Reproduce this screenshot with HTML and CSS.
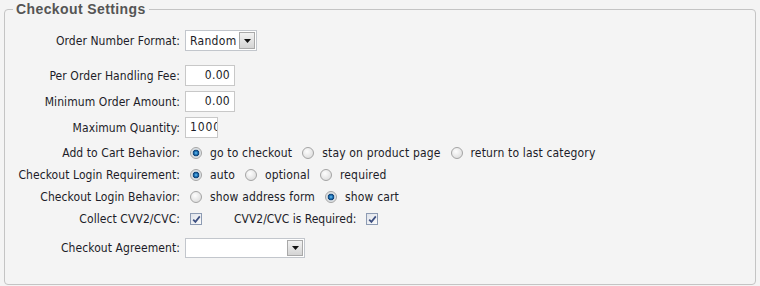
FILE: index.html
```html
<html>
	<head>
		<link rel="stylesheet" href="styles.css">
	</head>
	<body>
		<fieldset class="settings">
  <legend>Checkout Settings</legend>

  <div class="row row-first">
    <span class="field-label">Order Number Format:</span>
    <div class="select select-format">
      <span class="select-value">Random</span>
      <span class="select-btn"><svg width="7" height="4" viewBox="0 0 7 4"><path d="M0 0h7L3.5 4z" fill="#111"/></svg></span>
    </div>
  </div>

  <div class="row">
    <span class="field-label">Per Order Handling Fee:</span>
    <span class="text-input money">0.00</span>
  </div>
  <div class="row">
    <span class="field-label">Minimum Order Amount:</span>
    <span class="text-input money">0.00</span>
  </div>
  <div class="row row-last-input">
    <span class="field-label">Maximum Quantity:</span>
    <span class="text-input qty">1000</span>
  </div>

  <div class="row row-choice">
    <span class="field-label">Add to Cart Behavior:</span>
    <div class="options">
      <span class="radio checked"></span><span class="opt">go to checkout</span>
      <span class="radio"></span><span class="opt">stay on product page</span>
      <span class="radio"></span><span class="opt">return to last category</span>
    </div>
  </div>
  <div class="row row-choice">
    <span class="field-label">Checkout Login Requirement:</span>
    <div class="options">
      <span class="radio checked"></span><span class="opt">auto</span>
      <span class="radio"></span><span class="opt">optional</span>
      <span class="radio"></span><span class="opt">required</span>
    </div>
  </div>
  <div class="row row-choice">
    <span class="field-label">Checkout Login Behavior:</span>
    <div class="options">
      <span class="radio"></span><span class="opt">show address form</span>
      <span class="radio checked"></span><span class="opt">show cart</span>
    </div>
  </div>
  <div class="row row-choice row-cvv">
    <span class="field-label">Collect CVV2/CVC:</span>
    <div class="options">
      <span class="checkbox"><svg width="9" height="9" viewBox="0 0 9 9"><path d="M1.2 4.6l2.2 2.3L7.8 1.4" stroke="#3d4f80" stroke-width="1.7" fill="none"/></svg></span>
      <span class="inline-label">CVV2/CVC is Required:</span>
      <span class="checkbox"><svg width="9" height="9" viewBox="0 0 9 9"><path d="M1.2 4.6l2.2 2.3L7.8 1.4" stroke="#3d4f80" stroke-width="1.7" fill="none"/></svg></span>
    </div>
  </div>

  <div class="row">
    <span class="field-label">Checkout Agreement:</span>
    <div class="select select-agreement">
      <span class="select-value"></span>
      <span class="select-btn"><svg width="7" height="4" viewBox="0 0 7 4"><path d="M0 0h7L3.5 4z" fill="#111"/></svg></span>
    </div>
  </div>
</fieldset>
	</body>

</html>
```

FILE: styles.css
```css
body {
  margin: 0;
  background: #f4f4f4;
  color: #1c1c28;
  font: 12px "DejaVu Sans Condensed", "Liberation Sans", sans-serif;
}

.settings {
  margin: 0 4px;
  padding: 12px 0 21px;
  border: 1px solid #c4c4c4;
  border-radius: 4px;
}

.settings legend {
  margin-left: 8px;
  padding: 0 3px;
  color: #555;
  font: bold 14px/18px "Liberation Sans", Arial, sans-serif;
  letter-spacing: 0.4px;
}

/* label column + control column */
.row {
  display: grid;
  grid-template-columns: 175px auto;
  column-gap: 5px;
  align-items: center;
  justify-items: start;
  height: 21px;
  margin-bottom: 5px;
}

.row-first {
  margin-bottom: 14px;
}

.row-last-input {
  margin-bottom: 4px;
}

.row-choice {
  height: 22px;
  margin-bottom: 0;
}

.row-cvv {
  margin-bottom: 7px;
}

.field-label {
  justify-self: end;
  white-space: nowrap;
  letter-spacing: 0.08px;
}

.text-input {
  box-sizing: border-box;
  height: 21px;
  padding: 0 4px;
  border: 1px solid #c8c8c8;
  background: #fff;
  line-height: 19px;
  overflow: hidden;
  white-space: nowrap;
}

.money {
  width: 50px;
  text-align: right;
  letter-spacing: 0.3px;
}

.qty {
  width: 33px;
  padding: 0 0 0 4px;
  letter-spacing: 0.9px;
  text-overflow: clip;
}

.select {
  box-sizing: border-box;
  display: flex;
  align-items: center;
  height: 21px;
  padding: 1px;
  border: 1px solid #c2c6cc;
  background: #fff;
}

.select-format {
  width: 72px;
}

.select-agreement {
  width: 120px;
  height: 20px;
}

.select-value {
  flex: 1;
  padding-left: 3px;
  letter-spacing: 0.3px;
}

.select-btn {
  box-sizing: border-box;
  display: flex;
  align-items: center;
  justify-content: center;
  width: 16px;
  height: 100%;
  border: 1px solid #a9a9a9;
  background: linear-gradient(#f2f2f2, #d4d4d4);
}

.options {
  display: flex;
  align-items: center;
}

.opt {
  margin: 0 5px 0 8px;
  letter-spacing: 0.16px;
}

.radio {
  box-sizing: border-box;
  width: 12px;
  height: 12px;
  margin-left: 5px;
  border: 1px solid #a4a4a4;
  border-radius: 50%;
  background: radial-gradient(circle at 40% 35%, #fdfdfd, #d6d6d6);
}

.radio.checked {
  background: radial-gradient(circle, #6ec4f2 0, #2075b8 1.6px, #0f3f72 3px, #cfd6dc 3.6px, #f3f3f3 6px);
}

.checkbox {
  box-sizing: border-box;
  display: flex;
  align-items: center;
  justify-content: center;
  width: 12px;
  height: 12px;
  margin-left: 5px;
  border: 1px solid #8d9bb3;
  background: linear-gradient(135deg, #dfe3ea, #fbfbfb);
}

.inline-label {
  margin: 0 5px 0 32px;
}
```
